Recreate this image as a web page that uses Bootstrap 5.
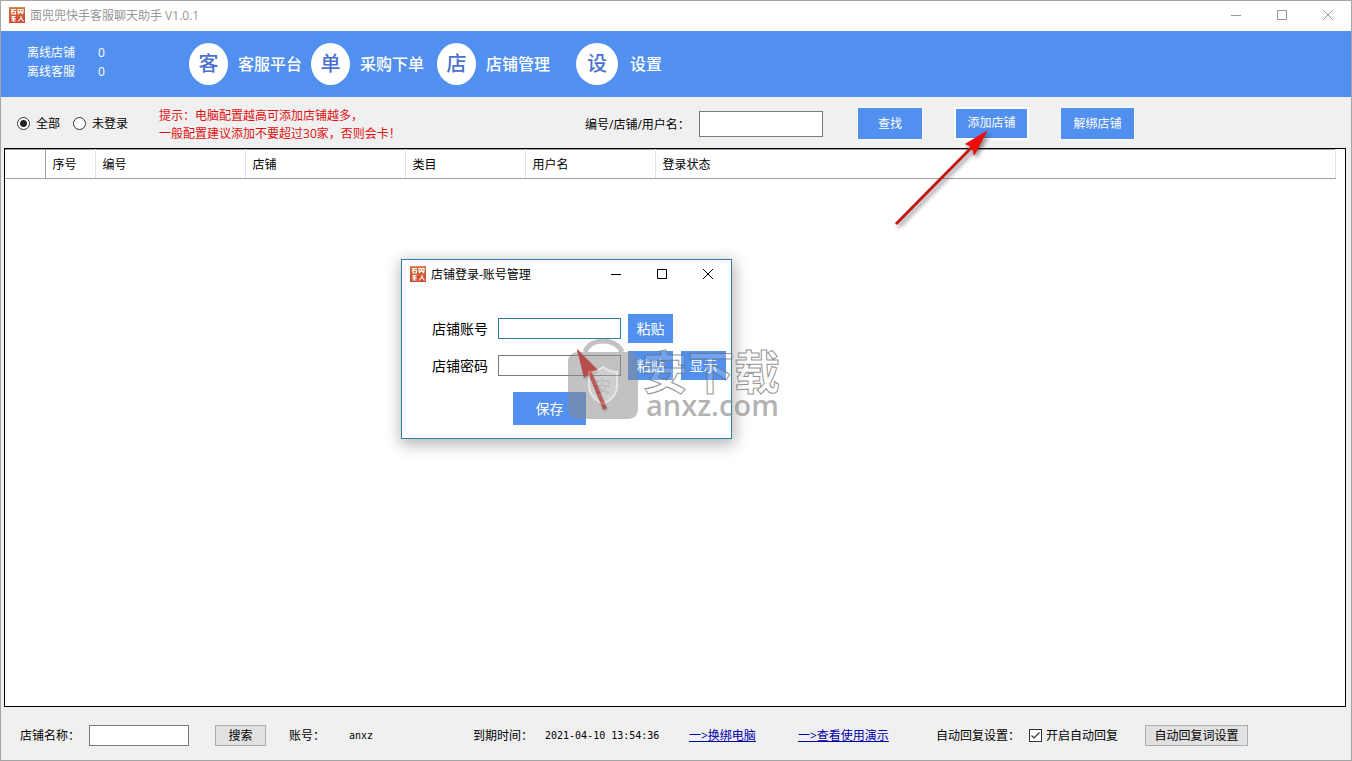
<!DOCTYPE html>
<html lang="zh-CN">
<head>
<meta charset="utf-8">
<meta name="viewport" content="width=device-width, initial-scale=1">
<title>面兜兜快手客服聊天助手 V1.0.1</title>
<link href="https://cdn.jsdelivr.net/npm/bootstrap@5.3.0/dist/css/bootstrap.min.css" rel="stylesheet">
<style>
:root { --brand: #5190ef; --face: #f0f0f0; }
body { font: 12px/17px "Open Sans", "Noto Sans CJK SC", sans-serif; color: #000; background: var(--face); }
button, input { font-family: inherit; }
.defs { position: absolute; width: 0; height: 0; }
.app-window { border: 1px solid #a5a5a5; min-width: 1280px; }
.title-bar { height: 30px; padding-bottom: 2px; }
.title-text { margin: 0 auto 0 5px; }
.main-title { color: #969696; }
.win-btn { width: 46px; height: 28px; border: 0; background: none; padding: 0; color: inherit; display: flex; align-items: center; justify-content: center; }
.win-btn svg { width: 12px; height: 12px; fill: none; stroke: currentColor; }
.top-band { background: var(--brand); height: 66px; }
.counts { width: 188px; padding-left: 26px; line-height: 19px; }
.counts dl { grid-template-columns: 71px auto; padding-bottom: 5px; }
.menu-link { color: #fff; font-size: 16px; line-height: 20px; font-weight: 500; gap: 10px; text-decoration: none; }
.menu-link:hover { color: #fff; }
.disc { width: 39px; height: 42px; border-radius: 50%; background: #fff; color: #4b70cf; font-size: 20px; }
.disc-wide { width: 42px; margin-right: 2px; }
.gap-a { margin-left: 9px; }
.gap-b { margin-left: 13px; }
.gap-c { margin-left: 26px; }
.tool-bar { height: 51px; padding: 2px 0 0 16px; }
.tick { appearance: none; width: 13px; height: 13px; border: 1px solid #333; background: #fff; margin: 0 6px 0 0; flex: none; }
.tick[type=radio] { border-radius: 50%; }
.tick[type=radio]:checked { background: radial-gradient(circle, #222 0 3px, #fff 4px); }
.tick[type=checkbox]:checked { background: #fff url("data:image/svg+xml,%3Csvg xmlns='http://www.w3.org/2000/svg' viewBox='0 0 11 11'%3E%3Cpath d='M1.5 5.5 4 8 9.5 2.5' fill='none' stroke='%23333' stroke-width='1.2'/%3E%3C/svg%3E"); margin-right: 4px; }
.punct { font-family: "Noto Sans CJK TC", sans-serif; }
.hint { color: #e01010; width: 426px; margin: 0 0 0 31px; }
.field { border: 1px solid #7a7a7a; border-radius: 0; background: #fff; padding: 0 4px; }
.field:focus, .field-active { outline: 0; border-color: #2f7ea8; }
.field-find { width: 124px; height: 26px; margin-right: 3px; }
.act { background: var(--brand); color: #fff; border: 0; border-radius: 0; padding: 0; font-size: 12px; line-height: 17px; }
.act:hover { background: #437fd9; color: #fff; }
.act-bar { width: 64px; height: 31px; margin-left: 32px; box-shadow: 0 0 0 1px #f8f8fa; }
.act-shop { width: 73px; }
.act-default { width: 75px; height: 33px; border: 2px solid #fff; padding-bottom: 2px; box-shadow: none; }
.grid-box { border: 1px solid #000; margin: 0 5px 0 3px; background: #fff; padding-right: 9px; }
.shop-grid { table-layout: fixed; width: 100%; border-collapse: collapse; border-top: 1px solid #a0a0a0; }
.shop-grid th { height: 29px; font-weight: 400; padding: 0 7px; border-right: 1px solid #e2e2e2; border-bottom: 1px solid #a0a0a0; vertical-align: middle; }
.shop-grid th:first-child { border-right-color: #a0a0a0; }
.status-bar { height: 53px; padding: 4px 0 0 19px; }
.mono { font-family: "DejaVu Sans Mono", monospace; font-size: 10px; }
.gray-btn { border: 1px solid #adadad; background: #e1e1e1; color: #000; height: 21px; padding: 0; line-height: 17px; }
.status-bar a { color: #0000a8; }
.login-window { position: absolute; left: 400px; top: 258px; width: 331px; background: #fff; border: 1px solid #2f7ea8; box-shadow: 1px 4px 14px 2px rgba(0,0,0,.28); }
.login-form { padding: 24px 0 13px 30px; font-size: 14px; }
.login-form .act { font-size: 14px; width: 45px; height: 29px; }
.login-form .act-save { width: 73px; height: 33px; margin: 12px 0 0 81px; }
.login-form label { width: 66px; }
.login-form .field { width: 123px; height: 21px; margin-right: 7px; }
.pointer-arrow { position: absolute; left: 889px; top: 125px; width: 108px; height: 106px; pointer-events: none; }
.site-mark { position: absolute; left: 565px; top: 335px; pointer-events: none; }
.site-mark svg { width: 76px; height: 86px; flex: none; }
.mark-name { font: 700 46px/50px "Noto Sans CJK SC", sans-serif; color: rgba(255,255,255,.2); -webkit-text-stroke: 1px rgba(110,110,110,.75); }
.mark-site { font: 600 29px/28px "Open Sans", sans-serif; color: rgba(128,128,128,.6); margin: -3px 0 0 4px; }
</style>
<script src="https://cdn.jsdelivr.net/npm/bootstrap@5.3.0/dist/js/bootstrap.bundle.min.js"></script>
</head>
<body>
<svg class="defs" aria-hidden="true">
  <linearGradient id="ember" x2="0" y2="1"><stop stop-color="#cf743c"/><stop offset="1" stop-color="#cf4832"/></linearGradient>
  <symbol id="app-logo" viewBox="0 0 16 16">
    <path fill="url(#ember)" d="M0 0h16v16H0z"/>
    <path fill="none" stroke="#fff" stroke-width="1.1" d="M2 2.500h5M4.500 2.500 2 5M3 4.500h3.500v2.500H3zM9 2.500h5v2.500H9zM11.500 2.500v2.500M9 7l2-2M14 7l-2-2M2.500 9.500h4M2 12h5M4.500 9v5M2.500 14h4M3 10.500l3 1M12 9v2l-3 3.500M12 11l2.500 3.500"/>
    <path stroke="#f0c0a0" stroke-width=".6" stroke-dasharray="1 1" d="M1 .5h14"/>
  </symbol>
  <symbol id="win-min" viewBox="0 0 12 12"><path d="M1 6.500h10"/></symbol>
  <symbol id="win-max" viewBox="0 0 12 12"><path d="M1.500 1.500h9v9h-9z"/></symbol>
  <symbol id="win-close" viewBox="0 0 12 12"><path d="m1 1 10 10M11 1 1 11"/></symbol>
</svg>

<div class="app-window position-relative vh-100 d-flex flex-column">
  <header class="title-bar main-title bg-white d-flex align-items-center ps-2">
    <svg width="16" height="16" aria-hidden="true"><use href="#app-logo"/></svg>
    <span class="title-text">面兜兜快手客服聊天助手 V1.0.1</span>
    <button class="win-btn" aria-label="最小化"><svg><use href="#win-min"/></svg></button>
    <button class="win-btn" aria-label="最大化"><svg><use href="#win-max"/></svg></button>
    <button class="win-btn" aria-label="关闭"><svg><use href="#win-close"/></svg></button>
  </header>

  <div class="top-band d-flex align-items-center text-white">
    <div class="counts">
      <dl class="d-grid mb-0">
        <dt class="fw-normal">离线店铺</dt><dd class="m-0">0</dd>
        <dt class="fw-normal">离线客服</dt><dd class="m-0">0</dd>
      </dl>
    </div>
    <nav class="d-flex align-items-center">
      <a href="#" class="menu-link d-flex align-items-center"><span class="disc d-flex align-items-center justify-content-center">客</span>客服平台</a>
      <a href="#" class="menu-link d-flex align-items-center gap-a"><span class="disc d-flex align-items-center justify-content-center">单</span>采购下单</a>
      <a href="#" class="menu-link d-flex align-items-center gap-b"><span class="disc d-flex align-items-center justify-content-center">店</span>店铺管理</a>
      <a href="#" class="menu-link d-flex align-items-center gap-c"><span class="disc disc-wide d-flex align-items-center justify-content-center">设</span>设置</a>
    </nav>
  </div>

  <form class="tool-bar d-flex align-items-center">
    <label class="d-flex align-items-center"><input class="tick" type="radio" name="scope" checked>全部</label>
    <label class="d-flex align-items-center gap-b"><input class="tick" type="radio" name="scope">未登录</label>
    <p class="hint">提示<span class="punct">：</span>电脑配置越高可添加店铺越多<span class="punct">，</span><br>一般配置建议添加不要超过30家<span class="punct">，</span>否则会卡<span class="punct">！</span></p>
    <label for="find" style="width:114px">编号/店铺/用户名<span class="punct">：</span></label>
    <input id="find" class="field field-find" type="text">
    <button type="button" class="act act-bar">查找</button>
    <button type="button" class="act act-bar act-default">添加店铺</button>
    <button type="button" class="act act-bar act-shop">解绑店铺</button>
  </form>

  <main class="grid-box flex-fill">
    <table class="shop-grid">
      <colgroup><col style="width:40px"><col style="width:50px"><col style="width:150px"><col style="width:160px"><col style="width:120px"><col style="width:130px"><col></colgroup>
      <thead><tr><th></th><th>序号</th><th>编号</th><th>店铺</th><th>类目</th><th>用户名</th><th>登录状态</th></tr></thead>
    </table>
  </main>

  <footer class="status-bar d-flex align-items-center">
    <label for="shop" style="width:69px">店铺名称：</label>
    <input id="shop" class="field" type="text" style="width:100px;height:21px">
    <button class="gray-btn" style="width:51px;margin-left:26px">搜索</button>
    <span style="width:60px;margin-left:23px">账号：</span>
    <span class="mono" style="width:124px">anxz</span>
    <span style="width:72px">到期时间：</span>
    <span class="mono" style="width:144px">2021-04-10 13:54:36</span>
    <a href="#" style="width:109px">一&gt;换绑电脑</a>
    <a href="#" style="width:138px">一&gt;查看使用演示</a>
    <span style="width:93px">自动回复设置：</span>
    <label class="d-flex align-items-center"><input class="tick" type="checkbox" checked>开启自动回复</label>
    <button class="gray-btn" style="width:103px;margin-left:27px">自动回复词设置</button>
  </footer>

  <section class="login-window" role="dialog" aria-label="店铺登录-账号管理">
    <div class="title-bar d-flex align-items-center ps-2">
      <svg width="16" height="16" aria-hidden="true"><use href="#app-logo"/></svg>
      <span class="title-text">店铺登录-账号管理</span>
      <button class="win-btn" aria-label="最小化"><svg><use href="#win-min"/></svg></button>
      <button class="win-btn" aria-label="最大化"><svg><use href="#win-max"/></svg></button>
      <button class="win-btn" aria-label="关闭"><svg><use href="#win-close"/></svg></button>
    </div>
    <form class="login-form">
      <div class="d-flex align-items-center mb-2">
        <label for="acct">店铺账号</label><input id="acct" class="field field-active" type="text"><button type="button" class="act">粘贴</button>
      </div>
      <div class="d-flex align-items-center">
        <label for="pass">店铺密码</label><input id="pass" class="field" type="password"><button type="button" class="act">粘贴</button><button type="button" class="act ms-2">显示</button>
      </div>
      <button type="button" class="act act-save">保存</button>
    </form>
  </section>

  <svg class="pointer-arrow" viewBox="0 0 108 106" aria-hidden="true">
    <g style="filter:drop-shadow(2px 3px 2px rgba(0,0,0,.45))">
      <path d="M6 98 84 19" stroke="#c41818" stroke-width="3"/>
      <path d="M98 4 75 18l6 3 2 4 1 5Z" fill="#f00a0a"/>
    </g>
  </svg>

  <div class="site-mark d-flex">
    <svg viewBox="0 0 76 86" aria-hidden="true">
      <g style="filter:drop-shadow(1px 2px 1px rgba(0,0,0,.3))">
        <path d="M22 32 39 73" stroke="#d01010" stroke-width="4"/>
        <path d="M11 13 32 34l-7 2-7 6Z" fill="#e80808"/>
      </g>
      <g opacity=".52">
        <path d="M19 16C22 8 30 5 37 5s16 3 19 11" fill="none" stroke="#8c8c8c" stroke-width="5"/>
        <rect x="2" y="16" width="70" height="67" rx="9" fill="#8c8c8c"/>
        <path d="M37 31c5 4 9 5 14 5v14c0 9-6 14-14 18-8-4-14-9-14-18V36c5 0 9-1 14-5Z" fill="#a5a5a5" stroke="#cfcfcf" stroke-width="2"/>
        <text x="37" y="56" text-anchor="middle" font-size="16" font-weight="700" fill="#858585" font-family="Noto Sans CJK SC, sans-serif">安</text>
      </g>
    </svg>
    <div class="d-flex flex-column pt-2">
      <span class="mark-name">安下载</span>
      <span class="mark-site">anxz.com</span>
    </div>
  </div>
</div>
</body>
</html>
